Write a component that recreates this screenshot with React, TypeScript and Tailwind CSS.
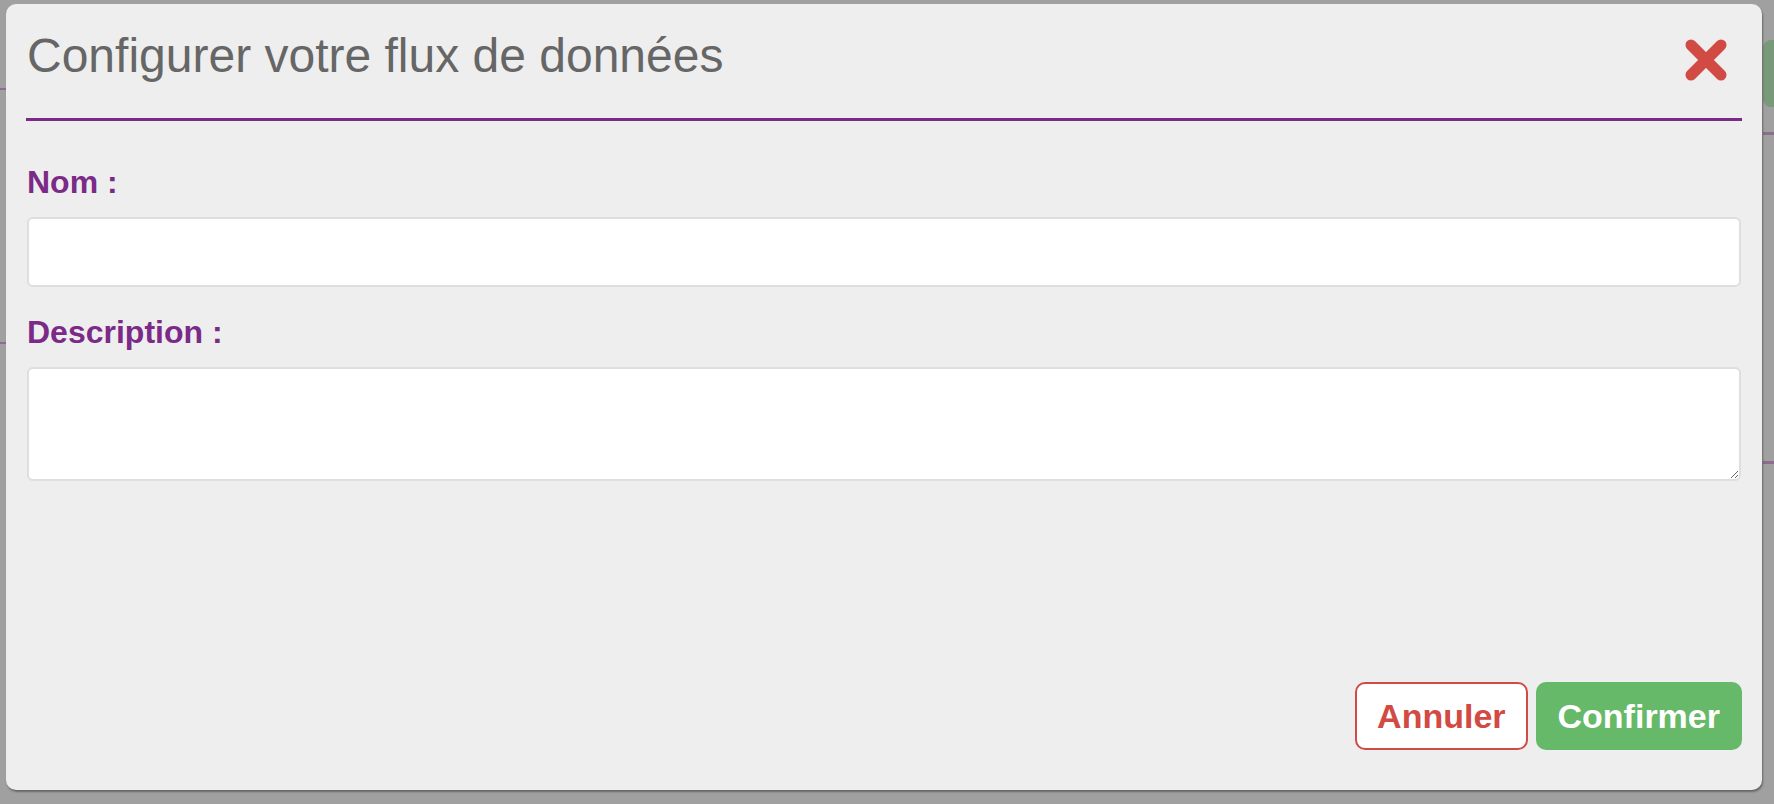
import React from "react";

const font = { fontFamily: '"Liberation Sans", Arial, Helvetica, sans-serif' };

function CloseIcon() {
    return (
        <svg width="42" height="42" viewBox="0 0 42 42" aria-hidden="true">
            <path d="M6 6 L36 36 M36 6 L6 36" stroke="#d14a43" strokeWidth="11" strokeLinecap="round" fill="none" />
        </svg>
    );
}

export default function App() {
    return (
        <div className="relative w-full h-[804px] overflow-hidden bg-[#a0a0a0]" style={font}>
            {/* dimmed page behind the modal */}
            <div className="flex justify-between h-full">
                <div className="w-[6px] flex flex-col">
                    <div className="h-[88px]" />
                    <div className="h-[2px] bg-[#8c6d8e]" />
                    <div className="h-[252px]" />
                    <div className="h-[2px] bg-[#8c6d8e]" />
                </div>
                <div className="w-[11px] flex flex-col">
                    <div className="h-[40px]" />
                    <div className="h-[67px] bg-[#789a79] rounded-l-[8px]" />
                    <div className="h-[25px]" />
                    <div className="h-[3px] bg-[#8c6d8e]" />
                    <div className="h-[326px]" />
                    <div className="h-[3px] bg-[#8c6d8e]" />
                </div>
            </div>

            {/* modal */}
            <div className="absolute left-[6px] top-[4px] w-[1756px] h-[786px] rounded-[10px] bg-[#eeeeee] shadow-[1px_2px_2px_rgba(0,0,0,0.35)] flex flex-col px-[20px] pt-[24px] pb-[40px]">
                <div className="flex items-start justify-between pb-[35px] pr-[15px] border-b-[3px] border-[#7b2a88]">
                    <h1 className="text-[48px] leading-[55px] text-[#666666] font-normal pl-[1px]">Configurer votre flux de données</h1>
                    <button className="mt-[11px]" aria-label="Fermer">
                        <CloseIcon />
                    </button>
                </div>

                <label className="mt-[43px] pl-[1px] text-[32px] leading-[37px] font-bold text-[#7b2a88]">Nom :</label>
                <input
                    type="text"
                    className="mt-4 h-[70px] mx-[1px] rounded-[6px] border-2 border-[#dedede] bg-white px-3 text-[28px] outline-none"
                />

                <label className="mt-[27px] pl-[1px] text-[32px] leading-[37px] font-bold text-[#7b2a88]">Description :</label>
                <textarea className="mt-4 h-[114px] mx-[1px] rounded-[6px] border-2 border-[#dedede] bg-white px-3 py-2 text-[28px] outline-none" />

                <div className="mt-auto flex justify-end gap-2">
                    <button className="h-[68px] px-5 rounded-[10px] border-2 border-[#d14a43] bg-white text-[34px] font-bold text-[#d14a43] flex items-center">
                        Annuler
                    </button>
                    <button className="h-[68px] px-5 rounded-[10px] border-2 border-[#66b968] bg-[#66b968] text-[34px] font-bold text-white flex items-center">
                        Confirmer
                    </button>
                </div>
            </div>
        </div>
    );
}
